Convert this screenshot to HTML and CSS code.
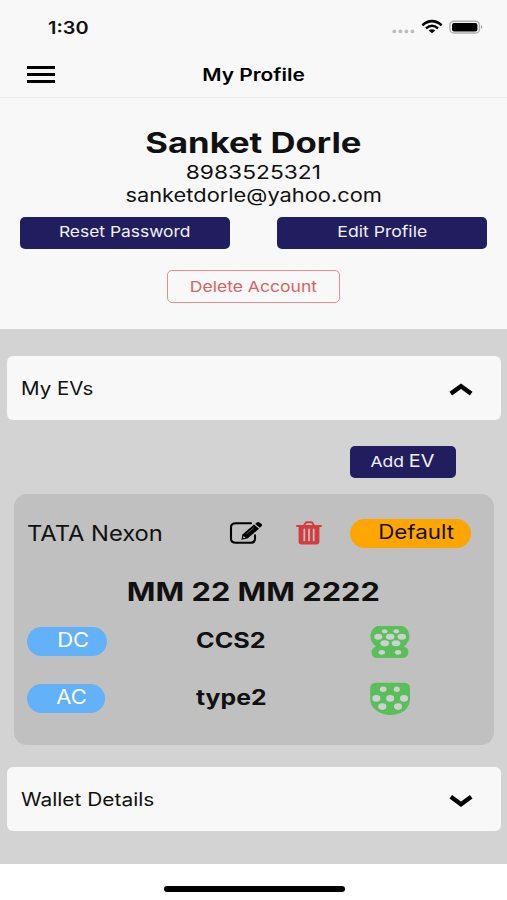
FILE: index.html
```html
<!DOCTYPE html>
<html lang="en">
<head>
<meta charset="utf-8">
<title>My Profile</title>
<link rel="stylesheet" href="styles.css">
</head>
<body>
<header class="top">
  <div class="status">
    <span class="t time">1:30</span>
    <svg class="status-icons" width="94" height="18" viewBox="0 0 94 18">
      <g fill="#bdbdbd"><circle cx="4.3" cy="13.4" r="1.9"/><circle cx="10.4" cy="13.4" r="1.9"/><circle cx="16.4" cy="13.4" r="1.9"/><circle cx="22.4" cy="13.4" r="1.9"/></g>
      <g fill="none" stroke="#000" stroke-width="2.5"><path d="M32.3 7.2 Q42 -1 51.7 7.2"/><path d="M36 10.4 Q42 5.2 48 10.4"/></g>
      <path d="M38.7 12.6 Q42 9.8 45.3 12.6 L42 15.3Z"/>
      <rect x="60" y="3.2" width="29.4" height="11.8" rx="3.8" ry="3.3" fill="none" stroke="#b0b0b0" stroke-width="1.4"/>
      <rect x="62" y="5" width="25.4" height="8.6" rx="2" fill="#000"/>
      <path d="M91 7 Q93.6 9 91 11Z" fill="#999"/>
    </svg>
  </div>
  <div class="nav">
    <div class="menu"><i></i><i></i><i></i></div>
    <h1 class="t title">My Profile</h1>
  </div>
</header>
<section class="profile">
  <h2 class="t name">Sanket Dorle</h2>
  <p class="t phone">8983525321</p>
  <p class="t email">sanketdorle@yahoo.com</p>
  <div class="actions">
    <button class="btn"><span class="t reset">Reset Password</span></button>
    <button class="btn"><span class="t edit">Edit Profile</span></button>
  </div>
  <button class="btn delete"><span class="t del-text">Delete Account</span></button>
</section>
<main class="content">
  <div class="panel"><span class="t left evs">My EVs</span>
    <svg class="chev" width="26" height="16" viewBox="0 0 26 16"><path d="M2.8 11.6 L13 4.2 L23.2 11.6"/></svg>
  </div>
  <button class="btn add"><span class="t add-text">Add <span class="ev-word">EV</span></span></button>
  <article class="ev">
    <div class="ev-head">
      <span class="t left model">TATA Nexon</span>
      <svg class="pencil" width="34" height="24" viewBox="0 0 34 24">
        <path d="M22 2.2H7Q2 2.2 2 6.2V17.8Q2 21.8 7 21.8H21Q26 21.8 26 17.8V14.2" fill="none" stroke="#000" stroke-width="2.1" stroke-linecap="round"/>
        <path d="M13.4 13.4 25 3.6 30 7.8 18.4 17.6 12.4 18.8Z"/>
        <path d="M26.2 2.9 28.2 1.3Q29.3 .6 30.4 1.4L32.6 3.1Q33.6 4 32.7 4.9L30.9 6.7Z"/>
        <path d="M14.5 15.1 16.7 16.9 14.8 17.3 14.1 16.7Z" fill="#c0c0c0"/><path d="M17.8 12.6 24.6 6.8" stroke="#8a8a8a" stroke-width=".7"/>
      </svg>
      <svg class="trash" width="26" height="24" viewBox="0 0 26 24">
        <path d="M1 5H25M7.8 5 9.4 2.2Q9.9 1.3 11 1.3H15Q16.1 1.3 16.6 2.2L18.2 5" fill="none" stroke="#d33d3d" stroke-width="1.9" stroke-linecap="round"/>
        <path d="M2.6 5H23.4V20.4Q23.4 23.4 20.5 23.4H5.5Q2.6 23.4 2.6 20.4Z" fill="#d33d3d"/>
        <path d="M8.3 8.5V19.4M13 8.5V19.4M17.7 8.5V19.4" stroke="#c4bcbc" stroke-width="1.8" stroke-linecap="round"/>
      </svg>
      <span class="pill default"><span class="t default-text">Default</span></span>
    </div>
    <h3 class="t plate">MM 22 MM 2222</h3>
    <div class="row">
      <span class="pill dc"><span class="t kind">DC</span></span>
      <b class="t left socket">CCS2</b>
      <svg class="plug" width="42" height="34" viewBox="0 0 42 34">
        <path d="M7 1H33Q38.7 4 39.5 10.5Q39.5 17 34 21.7Q38.4 23 38.4 26.5Q38.4 33 32.5 33H7.5Q1.5 33 1.5 27Q1.5 23 6 21.7Q.3 17 .3 10.5Q1 4 7 1Z"/>
        <g><ellipse cx="14.7" cy="6.2" rx="2.8" ry="2"/><ellipse cx="26.3" cy="6.2" rx="2.8" ry="2"/><ellipse cx="8.3" cy="11.7" rx="4" ry="3"/><ellipse cx="20.2" cy="11.7" rx="4.3" ry="3"/><ellipse cx="31.8" cy="11.7" rx="4.3" ry="3"/><ellipse cx="14.7" cy="18.2" rx="4.3" ry="3"/><ellipse cx="26" cy="18.2" rx="4.3" ry="3"/><ellipse cx="11.8" cy="27.3" rx="3.2" ry="2.4"/><ellipse cx="28" cy="27.3" rx="3.2" ry="2.4"/></g>
      </svg>
    </div>
    <div class="row">
      <span class="pill ac"><span class="t kind">AC</span></span>
      <b class="t left socket type">type2</b>
      <svg class="plug" width="42" height="34" viewBox="0 0 42 34">
        <path d="M5 .8H35Q40 1.6 40 6V18Q39 27 31 30.7Q20.5 35.5 10 30.7Q.6 26 .2 18V6Q.2 1.6 5 .8Z"/>
        <g><ellipse cx="13.2" cy="7.2" rx="3.3" ry="2.7"/><ellipse cx="26.8" cy="7.2" rx="3" ry="2.7"/><ellipse cx="6.3" cy="16.4" rx="4" ry="3.3"/><ellipse cx="20.2" cy="16.4" rx="4" ry="3.3"/><ellipse cx="34" cy="16.4" rx="4" ry="3.3"/><ellipse cx="12.3" cy="24.6" rx="4" ry="3.3"/><ellipse cx="28" cy="24.6" rx="4" ry="3.3"/></g>
      </svg>
    </div>
  </article>
  <div class="panel"><span class="t left wallet">Wallet Details</span>
    <svg class="chev" width="26" height="16" viewBox="0 0 26 16"><path d="M2.8 3.8 L13 11.2 L23.2 3.8"/></svg>
  </div>
</main>
<footer class="home"><div class="bar"></div></footer>
</body>
</html>
```
FILE: styles.css
```css
* { box-sizing: border-box; margin: 0; padding: 0; }
body {
  width: 507px; height: 900px; overflow: hidden;
  display: flex; flex-direction: column;
  font-family: Inter, "Liberation Sans", sans-serif;
  color: #111; background: #fff;
}
svg { display: block; flex-shrink: 0; }
.t { display: block; white-space: nowrap; font-weight: 400; transform: scaleX(var(--sx, 1.22)); }
.left { transform-origin: left center; }

.top { height: 98px; background: #f8f8f8; border-bottom: 1px solid #ebebeb; }
.status { display: flex; justify-content: space-between; align-items: center; height: 55px; padding: 0 23px 0 48px; }
.status-icons { margin: -1px 0 0 0; }
.time { --sx: 1.17; font-size: 17px; font-weight: 600; transform-origin: left; }
.nav { display: grid; grid-template-columns: 83px 1fr 83px; align-items: center; height: 39px; }
.menu { display: flex; flex-direction: column; gap: 4px; margin-left: 27px; width: 28px; }
.menu i { height: 3px; background: #000; }
.title { --sx: 1.23; font-size: 17px; font-weight: 600; text-align: center; color: #000; }

.profile { height: 231px; padding-top: 27px; background: #f8f8f8; display: flex; flex-direction: column; align-items: center; }
.name { --sx: 1.237; font-size: 28px; line-height: 36px; font-weight: 700; }
.phone, .email { font-size: 19px; line-height: 23px; }
.phone { --sx: 1.2; }
.email { --sx: 1.18; font-size: 18.5px; }
.actions { display: flex; justify-content: space-between; width: 467px; margin-top: 10px; }
.btn { display: flex; justify-content: center; border: 0; border-radius: 5px; width: 210px; height: 32px; background: #211d5e; color: #f0f0f8; font-family: inherit; font-size: 15px; line-height: 29px; }
.reset { --sx: 1.16; }
.edit { --sx: 1.175; }
.delete { width: 173px; height: 33px; margin-top: 21px; background: transparent; border: 1px solid #e79090; color: #dc6262; line-height: 31px; }
.del-text { --sx: 1.17; }

.content { height: 535px; padding: 27px 6.5px 0 7.4px; background: #d3d3d3; }
.panel { display: flex; align-items: center; justify-content: space-between; height: 64px; padding: 0 27px 0 13.6px; border-radius: 6px; background: #f8f8f8; font-size: 18px; }
.evs { --sx: 1.14; }
.wallet { --sx: 1.16; }
.chev { fill: none; stroke: #000; stroke-width: 4.4; margin-top: 4px; }
.add { width: 106px; margin: 26px 44.5px 0 auto; line-height: 31px; }
.add-text { --sx: 1.165; margin-left: -1px; }
.ev-word { font-size: 17px; }
.ev { height: 251px; margin: 16px 6.5px 22px; padding: 25px 23px 0 13px; border-radius: 13px; background: #c0c0c0; }
.ev-head { display: flex; align-items: center; height: 29px; }
.model { --sx: 1.13; font-size: 21px; width: 202px; }
.pencil { margin: -2px 33px 0 0; }
.trash { margin: -2px 28px 0 0; }
.pill { display: flex; justify-content: center; border-radius: 15px; height: 29px; font-size: 19.5px; line-height: 26px; }
.default { width: 121px; background: #ffa500; padding-left: 12px; }
.default-text { --sx: 1.145; }
.plate { --sx: 1.232; margin-top: 26px; font-size: 25px; line-height: 36px; font-weight: 700; text-align: center; padding-left: 7px; }
.row { display: grid; grid-template-columns: 169.6px 174px 42px; align-items: center; height: 34px; margin-top: 13px; }
.row + .row { margin-top: 23px; }
.row .pill { background: #63b1f9; color: #fff; padding-left: 12px; }
.kind { --sx: 1.13; }
.dc { width: 80px; }
.ac { width: 78px; }
.socket { --sx: 1.2; font-size: 21px; font-weight: 700; margin-top: -2px; }
.type { --sx: 1.18; }
.plug { fill: #5abf5b; margin-top: 2px; }
.plug g { fill: #d0d0d0; }

.home { flex: 1; display: flex; justify-content: center; padding: 22px 0 0 1px; }
.bar { width: 181px; height: 6px; border-radius: 3px; background: #000; }
```
